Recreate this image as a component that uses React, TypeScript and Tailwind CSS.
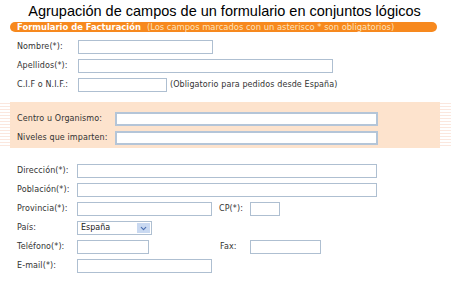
import { ChevronDown } from "lucide-react";

const label = "text-[8px] leading-[14px] text-[#333] whitespace-nowrap tracking-[0.1px]";
const field = "h-[14px] bg-white border border-[#aebfd1]";

function Row({ name, w, lw = "w-[61px]", children }: { name: string; w: string; lw?: string; children?: React.ReactNode }) {
  return (
    <div className="flex items-center h-[14px]">
      <span className={`${label} ${lw} shrink-0`}>{name}</span>
      <div className={`${field} ${w}`} />
      {children}
    </div>
  );
}

export default function App() {
  return (
    <div className="w-[451px] h-[281px] bg-white overflow-hidden font-['DejaVu_Sans',sans-serif]">
      <h1 className="font-['Liberation_Sans',Arial,sans-serif] text-[14.5px] leading-[20px] text-black text-center pt-[1px] pr-[2px]">
        Agrupación de campos de un formulario en conjuntos lógicos
      </h1>

      <div className="ml-[10px] w-[427px] h-[10px] mt-[1px] rounded-full bg-[#f7891e] pl-[7px] flex items-center text-[8.4px] leading-[10px] whitespace-nowrap">
        <span className="font-bold text-white">Formulario de Facturación</span>
        <span className="ml-[6px] text-[#fde3bd]">(Los campos marcados con un asterisco * son obligatorios)</span>
      </div>

      <div className="pl-[17px] pt-[8px] flex flex-col gap-[5px]">
        <Row name="Nombre(*):" w="w-[135px]" />
        <Row name="Apellidos(*):" w="w-[255px]" />
        <Row name="C.I.F o N.I.F.:" w="w-[89px]">
          <span className={`${label} ml-[3px]`}>(Obligatorio para pedidos desde España)</span>
        </Row>
      </div>

      <div className="flex mt-[10px] h-[46px]">
        <div className="w-[10px] bg-[repeating-linear-gradient(0deg,#ffffff_0px,#ffffff_2px,#fbe7de_2px,#fbe7de_3px)]" />
        <div className="w-[430px] bg-[#fde3cd] pl-[7px] pt-[10px] flex flex-col gap-[5px]">
          <div className="flex items-center h-[14px]">
            <span className={`${label} w-[98px] shrink-0`}>Centro u Organismo:</span>
            <div className="h-[14px] w-[263px] bg-white border-2 border-[#b4c5d8]" />
          </div>
          <div className="flex items-center h-[14px]">
            <span className={`${label} w-[98px] shrink-0`}>Niveles que imparten:</span>
            <div className="h-[14px] w-[263px] bg-white border-2 border-[#b4c5d8]" />
          </div>
        </div>
        <div className="flex-1 bg-[repeating-linear-gradient(0deg,#ffffff_0px,#ffffff_2px,#fbe7de_2px,#fbe7de_3px)]" />
      </div>

      <div className="pl-[17px] pt-[16px] flex flex-col gap-[5px]">
        <Row name="Dirección(*):" w="w-[300px]" lw="w-[60px]" />
        <Row name="Población(*):" w="w-[300px]" lw="w-[60px]" />
        <Row name="Provincia(*):" w="w-[135px]" lw="w-[60px]">
          <span className={`${label} ml-[7px] w-[31px]`}>CP(*):</span>
          <div className={`${field} w-[30px]`} />
        </Row>
        <div className="flex items-center h-[14px]">
          <span className={`${label} w-[60px] shrink-0`}>País:</span>
          <div className={`${field} w-[75px] flex items-center justify-between pl-[3px] pr-[1px]`}>
            <span className="text-[8px] text-[#222] leading-[12px]">España</span>
            <span className="w-[13px] h-[10px] bg-[#c9d9f1] flex items-center justify-center">
              <ChevronDown size={9} strokeWidth={3} className="text-[#4a6fb0]" />
            </span>
          </div>
        </div>
        <Row name="Teléfono(*):" w="w-[72px]" lw="w-[60px]">
          <span className={`${label} ml-[71px] w-[30px]`}>Fax:</span>
          <div className={`${field} w-[71px]`} />
        </Row>
        <Row name="E-mail(*):" w="w-[135px]" lw="w-[60px]" />
      </div>
    </div>
  );
}
